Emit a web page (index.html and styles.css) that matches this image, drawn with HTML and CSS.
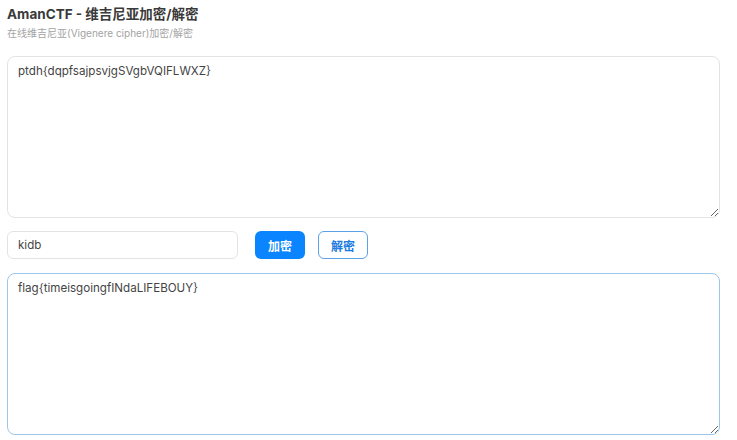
FILE: index.html
```html
<!DOCTYPE html>
<html lang="zh-CN">
<head>
    <meta charset="UTF-8">
    <meta name="viewport" content="width=device-width, initial-scale=1.0">
    <title>AmanCTF - 维吉尼亚加密/解密</title>
    <link rel="stylesheet" href="styles.css">
</head>
<body>

    <h1>AmanCTF - 维吉尼亚加密/解密</h1>
    <p class="desc">在线维吉尼亚(Vigenere cipher)加密/解密</p>

    <textarea id="source" class="box">ptdh{dqpfsajpsvjgSVgbVQIFLWXZ}</textarea>

    <div class="controls">
        <input type="text" id="key" value="kidb">
        <button class="btn primary">加密</button>
        <button class="btn outline">解密</button>
    </div>

    <textarea id="output" class="box active">flag{timeisgoingfINdaLIFEBOUY}</textarea>

</body>
</html>
```

FILE: styles.css
```css
body {
    font-family: Inter, "Noto Sans CJK SC", sans-serif;
    margin: 0;
    padding: 0 7px 0 7px;
    color: #333;
}
h1 {
    font-size: 13.5px;
    font-weight: 700;
    color: #3a3a3a;
    margin: 5px 0 0 0;
    line-height: 18px;
}
.desc {
    font-size: 10px;
    color: #a3a3a3;
    margin: 3px 0 0 0;
    line-height: 14px;
}
.box {
    display: block;
    box-sizing: border-box;
    width: 713px;
    height: 162px;
    margin: 16px 0 0 0;
    padding: 6px 10px;
    font-family: Inter, "Noto Sans CJK SC", sans-serif;
    font-size: 11.6px;
    line-height: 16px;
    color: #444;
    border: 1px solid #e3e3e3;
    border-radius: 8px;
    outline: none;
    resize: vertical;
}
.box.active {
    border-color: #9cc6ea;
    margin-top: 0;
}
.controls {
    display: flex;
    align-items: center;
    gap: 13px;
    margin: 13px 0 14px 0;
}
.controls input {
    box-sizing: border-box;
    width: 231px;
    height: 28px;
    padding: 0 10px;
    font-family: Inter, sans-serif;
    font-size: 11.6px;
    color: #444;
    border: 1px solid #e3e3e3;
    border-radius: 6px;
    outline: none;
    margin-right: 4px;
}
.btn {
    box-sizing: border-box;
    width: 50px;
    height: 28px;
    font-family: "Noto Sans CJK SC", sans-serif;
    font-size: 12px;
    font-weight: 700;
    border-radius: 6px;
    cursor: pointer;
    padding: 0;
}
.primary {
    background-color: #0a84ff;
    color: white;
    border: none;
}
.outline {
    background-color: white;
    color: #1a7be0;
    border: 1px solid #5aa2e8;
}
```
